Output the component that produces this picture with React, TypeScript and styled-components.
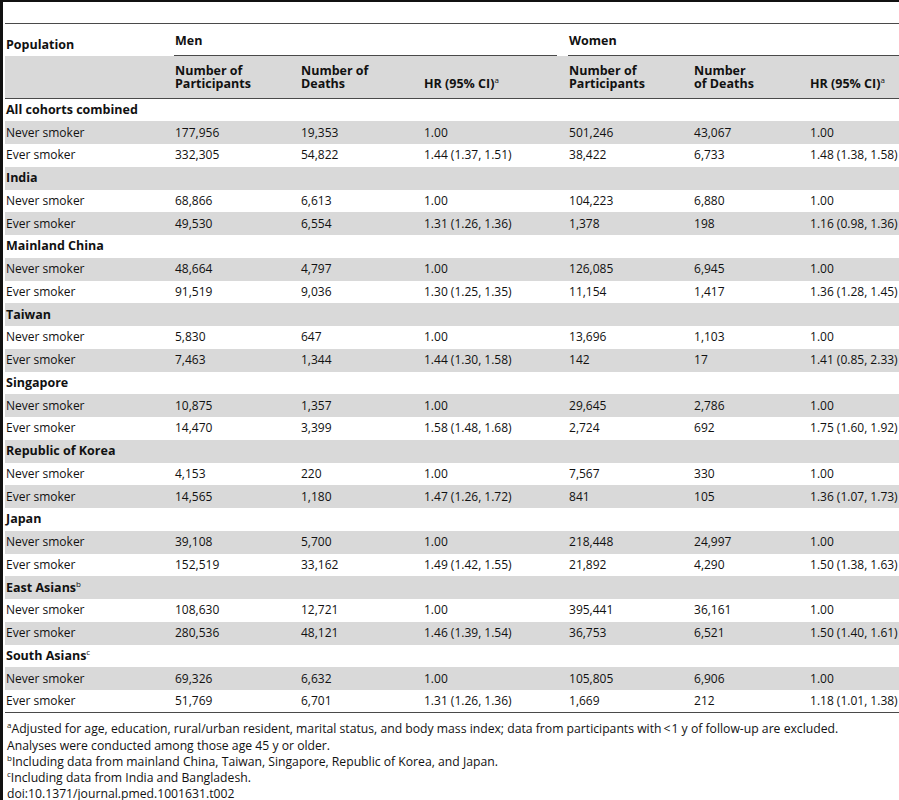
import styled, { createGlobalStyle } from "styled-components";

const GlobalStyle = createGlobalStyle`
  html, body {
    margin: 0;
    padding: 0;
    background: #ffffff;
  }
  body {
    font-family: "Open Sans", "DejaVu Sans", sans-serif;
    color: #111;
  }
`;

const Frame = styled.div`
  min-height: 100vh;
  box-sizing: border-box;
  border-top: 2px solid #111;
  border-left: 3px solid #111;
  padding: 21px 0 0 2px;
`;

const Table = styled.table`
  width: 894px;
  table-layout: fixed;
  border-collapse: collapse;
  border-top: 1px solid #4a4a4a;
  border-bottom: 1px solid #4a4a4a;
  font-size: 12px;
`;

const HeadRow = styled.tr`
  height: 32px;
`;

const SubHeadRow = styled.tr`
  height: 43px;
  background: #d9d9d9;
  border-bottom: 1px solid #4a4a4a;
`;

const HeadCell = styled.th`
  padding: 0 0 0 1px;
  text-align: left;
  font-weight: 700;
  font-size: 12.5px;
  line-height: 13px;
  vertical-align: bottom;
`;

const PopulationCell = styled(HeadCell)`
  padding-bottom: 5px;
`;

const GroupCell = styled.th`
  padding: 0;
  text-align: left;
  vertical-align: bottom;
`;

const GroupLabel = styled.div<{ $gap: number }>`
  font-weight: 700;
  font-size: 12.5px;
  line-height: 14px;
  padding: 0 0 7px 1px;
  margin-right: ${props => props.$gap}px;
  border-bottom: 1px solid #4a4a4a;
`;

const SubHeadCell = styled(HeadCell)`
  padding-bottom: 8px;
`;

const Row = styled.tr<{ $shade: boolean }>`
  height: 22.75px;
  background: ${props => (props.$shade ? "#d9d9d9" : "#ffffff")};
`;

const Cell = styled.td`
  padding: 0 0 0 1px;
  vertical-align: middle;
  white-space: nowrap;
  line-height: 14px;
`;

const SectionCell = styled(Cell)`
  font-weight: 700;
  font-size: 12.5px;
`;

const Sup = styled.sup`
  font-size: 8px;
  line-height: 0;
  vertical-align: 5px;
  font-weight: 400;
`;

const Notes = styled.div`
  padding: 8px 0 0 2px;
  font-size: 12.2px;
  line-height: 16.25px;
`;

const Note = styled.div``;

const Lt = styled.span`
  margin: 0 1px 0 2px;
`;

interface ISection {
    name: string;
    mark?: string;
    never: string[];
    ever: string[];
}

const sections: ISection[] = [
    { name: "All cohorts combined",
      never: ["177,956", "19,353", "1.00", "501,246", "43,067", "1.00"],
      ever: ["332,305", "54,822", "1.44 (1.37, 1.51)", "38,422", "6,733", "1.48 (1.38, 1.58)"] },
    { name: "India",
      never: ["68,866", "6,613", "1.00", "104,223", "6,880", "1.00"],
      ever: ["49,530", "6,554", "1.31 (1.26, 1.36)", "1,378", "198", "1.16 (0.98, 1.36)"] },
    { name: "Mainland China",
      never: ["48,664", "4,797", "1.00", "126,085", "6,945", "1.00"],
      ever: ["91,519", "9,036", "1.30 (1.25, 1.35)", "11,154", "1,417", "1.36 (1.28, 1.45)"] },
    { name: "Taiwan",
      never: ["5,830", "647", "1.00", "13,696", "1,103", "1.00"],
      ever: ["7,463", "1,344", "1.44 (1.30, 1.58)", "142", "17", "1.41 (0.85, 2.33)"] },
    { name: "Singapore",
      never: ["10,875", "1,357", "1.00", "29,645", "2,786", "1.00"],
      ever: ["14,470", "3,399", "1.58 (1.48, 1.68)", "2,724", "692", "1.75 (1.60, 1.92)"] },
    { name: "Republic of Korea",
      never: ["4,153", "220", "1.00", "7,567", "330", "1.00"],
      ever: ["14,565", "1,180", "1.47 (1.26, 1.72)", "841", "105", "1.36 (1.07, 1.73)"] },
    { name: "Japan",
      never: ["39,108", "5,700", "1.00", "218,448", "24,997", "1.00"],
      ever: ["152,519", "33,162", "1.49 (1.42, 1.55)", "21,892", "4,290", "1.50 (1.38, 1.63)"] },
    { name: "East Asians", mark: "b",
      never: ["108,630", "12,721", "1.00", "395,441", "36,161", "1.00"],
      ever: ["280,536", "48,121", "1.46 (1.39, 1.54)", "36,753", "6,521", "1.50 (1.40, 1.61)"] },
    { name: "South Asians", mark: "c",
      never: ["69,326", "6,632", "1.00", "105,805", "6,906", "1.00"],
      ever: ["51,769", "6,701", "1.31 (1.26, 1.36)", "1,669", "212", "1.18 (1.01, 1.38)"] },
];

const widths = [169, 126, 123, 145, 125, 116, 90];

function App() {
    return (
        <>
            <GlobalStyle />
            <Frame>
                <Table>
                    <colgroup>
                        {widths.map((w, i) => <col key={i} style={{ width: w }} />)}
                    </colgroup>
                    <thead>
                        <HeadRow>
                            <PopulationCell>Population</PopulationCell>
                            <GroupCell colSpan={3}><GroupLabel $gap={11}>Men</GroupLabel></GroupCell>
                            <GroupCell colSpan={3}><GroupLabel $gap={0}>Women</GroupLabel></GroupCell>
                        </HeadRow>
                        <SubHeadRow>
                            <SubHeadCell />
                            <SubHeadCell>Number of<br />Participants</SubHeadCell>
                            <SubHeadCell>Number of<br />Deaths</SubHeadCell>
                            <SubHeadCell>HR (95% CI)<Sup>a</Sup></SubHeadCell>
                            <SubHeadCell>Number of<br />Participants</SubHeadCell>
                            <SubHeadCell>Number<br />of Deaths</SubHeadCell>
                            <SubHeadCell>HR (95% CI)<Sup>a</Sup></SubHeadCell>
                        </SubHeadRow>
                    </thead>
                    <tbody>
                        {sections.map((s, i) => {
                            const base = i * 3;
                            return [
                                <Row key={s.name} $shade={base % 2 === 1}>
                                    <SectionCell colSpan={7}>
                                        {s.name}{s.mark && <Sup>{s.mark}</Sup>}
                                    </SectionCell>
                                </Row>,
                                <Row key={s.name + "-never"} $shade={(base + 1) % 2 === 1}>
                                    <Cell>Never smoker</Cell>
                                    {s.never.map((v, j) => <Cell key={j}>{v}</Cell>)}
                                </Row>,
                                <Row key={s.name + "-ever"} $shade={(base + 2) % 2 === 1}>
                                    <Cell>Ever smoker</Cell>
                                    {s.ever.map((v, j) => <Cell key={j}>{v}</Cell>)}
                                </Row>,
                            ];
                        })}
                    </tbody>
                </Table>
                <Notes>
                    <Note>
                        <Sup>a</Sup>Adjusted for age, education, rural/urban resident, marital status, and body mass index; data from participants with<Lt>&lt;</Lt>1 y of follow-up are excluded.
                    </Note>
                    <Note>Analyses were conducted among those age 45 y or older.</Note>
                    <Note><Sup>b</Sup>Including data from mainland China, Taiwan, Singapore, Republic of Korea, and Japan.</Note>
                    <Note><Sup>c</Sup>Including data from India and Bangladesh.</Note>
                    <Note>doi:10.1371/journal.pmed.1001631.t002</Note>
                </Notes>
            </Frame>
        </>
    );
}

export default App;
